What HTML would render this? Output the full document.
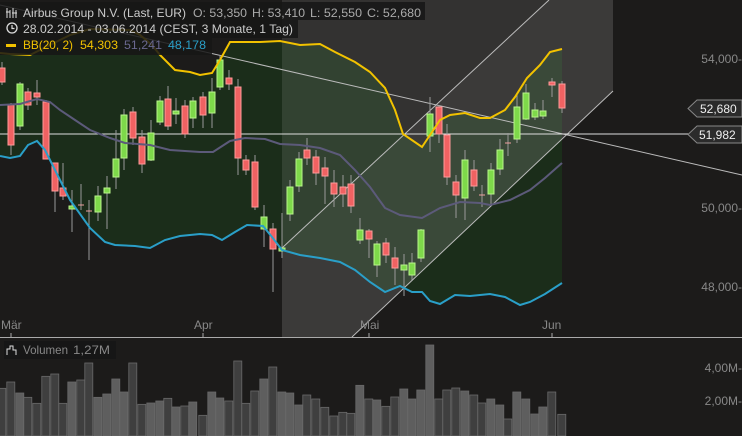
<!DOCTYPE html>
<html><head><meta charset="utf-8"><style>
html,body{margin:0;padding:0;background:#1c1b1a;}
body{width:742px;height:436px;overflow:hidden;position:relative;font-family:"Liberation Sans",sans-serif;}
svg{position:absolute;left:0;top:0;}
.t{font-family:"Liberation Sans",sans-serif;font-size:12px;}
</style></head><body>
<svg id="s" width="742" height="436" viewBox="0 0 742 436" xmlns="http://www.w3.org/2000/svg">
<rect width="742" height="436" fill="#1c1b1a"/>
<polygon fill="#1b2d1a" points="0,53 10,54 30,55 50,45 70,35 90,29 130,30 140,35 152,45 160,55 175,70 190,72 200,75 212,73 220,60 230,42 260,42 280,41 300,45 320,44 335,52 355,62 370,72 385,88 395,110 403,134 422,147 430,135 440,120 450,115 465,113 480,118 490,118 505,110 515,97 527,78 540,65 550,52 562,49 562,283 545,294 530,302 520,305 505,297 490,294 470,296 455,295 440,304 430,301 422,292 412,292 400,286 385,292 370,282 355,270 340,262 320,258 300,255 282,250 272,237 263,226 247,225 235,232 222,240 212,235 200,234 180,236 165,240 150,248 135,246 115,245 105,242 90,228 70,200 55,170 45,150 37,141 28,145 20,156 10,158 0,156"/>
<polygon fill="rgba(255,255,255,0.1)" points="282,0 613,0 613,91 352,337 282,337"/>
<polygon fill="rgba(255,255,255,0.04)" points="282,248 549,0 613,0 613,91 352,337 282,337"/>
<line x1="282" y1="248" x2="549" y2="0" stroke="#bbb" stroke-width="1"/>
<line x1="352" y1="337" x2="613" y2="91" stroke="#bbb" stroke-width="1"/>
<line x1="0" y1="5" x2="742" y2="175" stroke="#bbb" stroke-width="1"/>
<line x1="0" y1="134" x2="690" y2="134" stroke="#ddd" stroke-width="1"/>
<g id="candles"></g>
<polyline fill="none" stroke="#5c5a7a" stroke-width="2" points="0,105 20,104 37,99 50,102 60,110 75,120 90,130 110,138 125,143 150,145 170,150 200,152 213,152 230,141 245,138 265,139 280,144 300,145 320,148 340,155 355,170 370,187 385,208 400,215 422,218 440,208 460,202 480,203 490,205 510,200 530,190 545,178 562,163"/>
<polyline fill="none" stroke="#f2c200" stroke-width="2" points="0,53 10,54 30,55 50,45 70,35 90,29 130,30 140,35 152,45 160,55 175,70 190,72 200,75 212,73 220,60 230,42 260,42 280,41 300,45 320,44 335,52 355,62 370,72 385,88 395,110 403,134 422,147 430,135 440,120 450,115 465,113 480,118 490,118 505,110 515,97 527,78 540,65 550,52 562,49"/>
<polyline fill="none" stroke="#2a9fc8" stroke-width="2" points="0,156 10,158 20,156 28,145 37,141 45,150 55,170 70,200 90,228 105,242 115,245 135,246 150,248 165,240 180,236 200,234 212,235 222,240 235,232 247,225 263,226 272,237 282,250 300,255 320,258 340,262 355,270 370,282 385,292 400,286 412,292 422,292 430,301 440,304 455,295 470,296 490,294 505,297 520,305 530,302 545,294 562,283"/>
<!-- legend -->
<rect x="0" y="2" width="425" height="18" fill="rgba(22,22,22,0.85)"/>
<rect x="0" y="20" width="298" height="18" fill="rgba(22,22,22,0.85)"/>
<rect x="0" y="38" width="212" height="17" fill="rgba(22,22,22,0.85)"/>
<g stroke="#ddd" stroke-width="1" fill="none"><path d="M7,8v10M10,10v8M13,8v10M16,10v8M6,12h4M12,13h5"/></g>
<circle cx="12" cy="28" r="5" fill="none" stroke="#ddd" stroke-width="1.3"/><path d="M12,25v3.5h2.5" stroke="#ddd" fill="none" stroke-width="1.2"/>
<rect x="6" y="44" width="10" height="3" fill="#f2c200"/>
<text class="t" x="23" y="17" fill="#ccc" textLength="163" lengthAdjust="spacingAndGlyphs">Airbus Group N.V. (Last, EUR)</text>
<g class="t" fill="#aaa">
<text x="193" y="17" textLength="54" lengthAdjust="spacingAndGlyphs">O: 53,350</text>
<text x="252" y="17" textLength="53" lengthAdjust="spacingAndGlyphs">H: 53,410</text>
<text x="310" y="17" textLength="52" lengthAdjust="spacingAndGlyphs">L: 52,550</text>
<text x="367" y="17" textLength="54" lengthAdjust="spacingAndGlyphs">C: 52,680</text>
</g>
<text class="t" x="23" y="33" fill="#ccc" textLength="270" lengthAdjust="spacingAndGlyphs">28.02.2014 - 03.06.2014 (CEST, 3 Monate, 1 Tag)</text>
<g class="t">
<text x="23" y="49" fill="#f2c200" textLength="50" lengthAdjust="spacingAndGlyphs">BB(20, 2)</text>
<text x="80" y="49" fill="#f2c200" textLength="38" lengthAdjust="spacingAndGlyphs">54,303</text>
<text x="124" y="49" fill="#6a6890" textLength="38" lengthAdjust="spacingAndGlyphs">51,241</text>
<text x="168" y="49" fill="#2a9fc8" textLength="38" lengthAdjust="spacingAndGlyphs">48,178</text>
</g>
<!-- y axis -->
<g class="t" fill="#888" text-anchor="end">
<text x="742" y="63">54,000-</text><text x="742" y="212">50,000-</text><text x="742" y="291">48,000-</text>
<text x="742" y="372">4,00M-</text><text x="742" y="405">2,00M-</text>
</g>
<path d="M697,100H742V117H697L688,108.5Z" fill="#2b2b2b" stroke="#888"/>
<text class="t" x="700" y="113" fill="#eee">52,680</text>
<path d="M697,126H742V143H697L688,134.5Z" fill="#2b2b2b" stroke="#888"/>
<text class="t" x="699" y="139" fill="#eee">51,982</text>
<!-- x axis -->
<line x1="0" y1="337.5" x2="742" y2="337.5" stroke="#aaa"/>
<g stroke="#aaa"><line x1="11" y1="333" x2="11" y2="337"/><line x1="203" y1="333" x2="203" y2="337"/><line x1="369" y1="333" x2="369" y2="337"/><line x1="552" y1="333" x2="552" y2="337"/></g>
<g class="t" fill="#888"><text x="1" y="329">Mär</text><text x="194" y="329">Apr</text><text x="360" y="329">Mai</text><text x="542" y="329">Jun</text></g>
<g id="vol"></g>
<rect x="4" y="341" width="112" height="18" fill="#161616"/>
<path d="M7,355v-6h3v-3h3v4h3v5" fill="none" stroke="#ddd"/>
<text class="t" x="23" y="354" fill="#888" textLength="45" lengthAdjust="spacingAndGlyphs">Volumen</text>
<text class="t" x="73" y="354" fill="#888" textLength="37" lengthAdjust="spacingAndGlyphs">1,27M</text>
</svg>
<script>
var NS="http://www.w3.org/2000/svg";
function el(p,t,a){var e=document.createElementNS(NS,t);for(var k in a)e.setAttribute(k,a[k]);p.appendChild(e);return e;}
var C=[[2,68,82,62,85,'r'],[11,105,145,103,155,'r'],[20,84,126,82,130,'g'],[28,92,105,88,110,'r'],[37,93,97,80,105,'r'],[46,102,159,100,159,'r'],[55,163,191,163,212,'r'],[63,188,196,163,200,'r'],[72,206,209,190,232,'g'],[81,205,205,184,210,'d'],[89,211,211,200,260,'d'],[98,196,212,186,221,'g'],[107,188,193,176,229,'g'],[116,159,177,130,189,'g'],[124,115,158,109,170,'g'],[133,112,138,107,145,'r'],[142,137,164,130,173,'r'],[151,133,160,120,161,'g'],[160,101,122,96,125,'g'],[168,99,126,86,130,'r'],[176,111,113,98,124,'g'],[185,106,134,100,138,'r'],[193,101,118,97,128,'g'],[203,97,115,92,128,'r'],[212,92,113,78,128,'g'],[220,60,87,55,90,'g'],[229,78,84,70,90,'r'],[238,87,158,79,175,'r'],[246,160,170,155,175,'r'],[255,162,207,155,210,'r'],[264,217,229,205,247,'g'],[273,229,249,223,292,'r'],[282,248,251,213,258,'g'],[290,187,214,180,221,'g'],[299,159,186,152,192,'g'],[307,150,158,138,165,'r'],[316,157,173,150,185,'r'],[325,168,176,157,204,'r'],[334,183,194,170,207,'r'],[343,187,194,175,207,'r'],[351,184,206,175,213,'r'],[360,230,240,218,244,'g'],[369,231,239,229,258,'r'],[377,244,265,241,277,'g'],[386,243,255,238,263,'r'],[395,258,268,247,285,'r'],[404,265,270,254,296,'g'],[412,263,275,253,280,'g'],[421,230,258,229,262,'g'],[430,114,136,97,152,'g'],[439,107,134,105,143,'r'],[447,135,177,124,185,'r'],[456,182,195,175,218,'r'],[465,160,198,150,220,'g'],[474,170,186,160,191,'r'],[482,195,195,185,207,'d'],[491,170,194,163,204,'g'],[500,150,169,139,175,'g'],[508,143,143,133,156,'d'],[517,107,139,95,143,'g'],[526,93,119,84,120,'g'],[535,110,117,103,120,'g'],[543,111,116,100,119,'g'],[552,82,85,78,97,'r'],[562,84,108,81,113,'r']];
var g=document.getElementById('candles');
C.forEach(function(c){
 el(g,'line',{x1:c[0],x2:c[0],y1:c[3],y2:c[4],stroke:'#999','stroke-width':1});
 if(c[5]=='d'){el(g,'line',{x1:c[0]-3,x2:c[0]+3,y1:c[1],y2:c[1],stroke:'#f0a0a0','stroke-width':1});return;}
 var f=c[5]=='r'?'#f06262':'#7ed94a',s=c[5]=='r'?'#ff9a9a':'#b8f58a';
 el(g,'rect',{x:c[0]-3,y:c[1],width:6,height:Math.max(c[2]-c[1],3),fill:f,stroke:s,'stroke-width':1});
});
var V=[235,216,249,262,280,199,192,280,216,210,159,262,252,207,246,159,283,279,273,265,291,288,276,316,246,264,273,153,280,243,207,171,246,249,285,255,267,292,318,307,310,226,267,270,289,261,237,267,240,105,267,240,234,243,255,279,267,285,327,246,267,312,291,246,313];
var vg=document.getElementById('vol');
V.forEach(function(v,i){
 var x=C[i]?C[i][0]:i*8.75+2, top=310+v/3, col=(C[i]&&C[i][5]=='g')?'#5e5e5e':'#3f3f3f';
 el(vg,'rect',{x:x-4.2,y:top,width:8,height:436-top,fill:col,stroke:'#6a6a6a','stroke-width':0.8});
});
</script>
</body></html>
